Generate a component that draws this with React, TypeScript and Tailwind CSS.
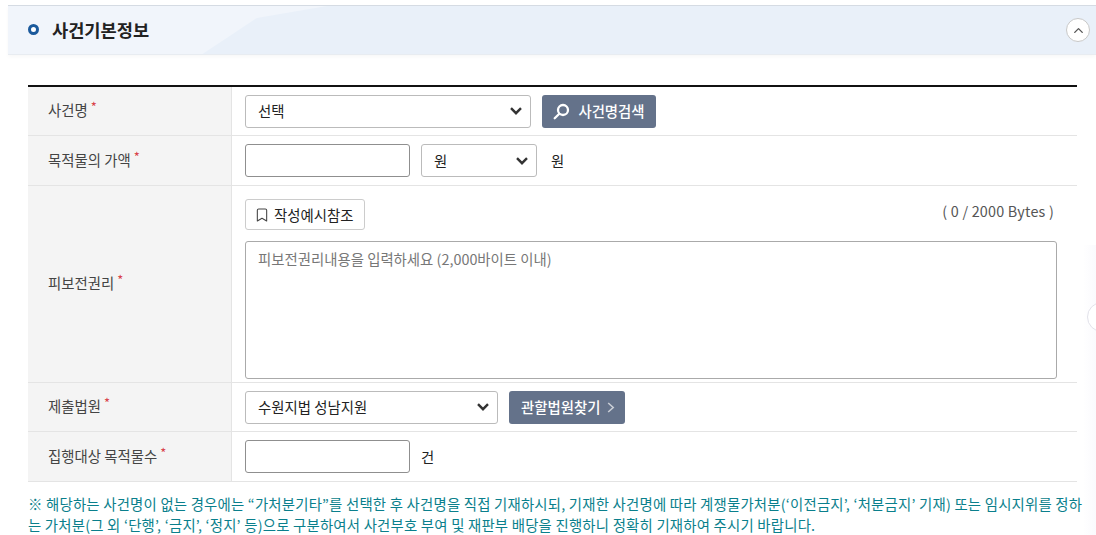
import { ChevronUp, Bookmark } from "lucide-react";
import type { ReactNode } from "react";

function Row({ label, className, children }: { label: string; className: string; children: ReactNode }) {
  return (
    <div className={`flex border-b border-[#e4e4e4] ${className}`}>
      <div className="flex w-[204px] shrink-0 items-center border-r border-[#e4e4e4] bg-[#f4f4f4] pb-[2px] pl-5 text-[14.4px] text-[#444]">
        {label}
        <span className="relative -top-[3px] ml-[3px] text-[13px] text-[#d9434a]">*</span>
      </div>
      <div className="min-w-0 flex-1 pl-[13px]">{children}</div>
    </div>
  );
}

function Caret() {
  return (
    <svg width="12" height="8" viewBox="0 0 12 8" fill="none" stroke="#333" strokeWidth="2.4">
      <path d="M1 1.2l5 5 5-5" />
    </svg>
  );
}

function Select({ value, className }: { value: string; className: string }) {
  return (
    <div className={`flex h-[33px] items-center justify-between rounded-[3px] border border-[#bbb] bg-white pl-3 pr-[8px] text-[14.4px] text-[#222] ${className}`}>
      {value}
      <Caret />
    </div>
  );
}

export default function App() {
  return (
    <div className="h-[535px] w-[1096px] overflow-hidden bg-white font-['Noto_Sans_CJK_KR','Noto_Sans',sans-serif]">
      <div className="pl-2 pt-[5px]">
        <div className="relative flex h-[50px] items-center justify-between overflow-hidden border-y border-t-[#d5dbe3] border-b-[#e8ecf1] bg-[#e9f0f9] pl-5 pr-[6px] shadow-[0_2px_4px_rgba(0,0,0,0.03)]">
          <span className="absolute inset-0 w-[319px] bg-[#f1f5fb] [clip-path:polygon(0_0,100%_0,78%_25%,61%_100%,0_100%)]" />
          <div className="relative flex items-center">
            <span className="h-[11px] w-[11px] rounded-full border-[3px] border-[#1c5a9c] bg-white" />
            <h2 className="ml-[13px] text-[17.6px] font-bold text-[#222]">사건기본정보</h2>
          </div>
          <button className="relative flex h-[24px] w-[24px] items-center justify-center rounded-full border border-[#c8c8c8] bg-white">
            <ChevronUp size={15} strokeWidth={2.2} className="text-[#555]" />
          </button>
        </div>
      </div>

      <div className="relative pl-7 pr-[19px] pt-[30px]">
        <div className="border-t-2 border-[#111]">
          <Row label="사건명" className="h-[49px]">
            <div className="flex h-full items-center">
              <Select value="선택" className="w-[286px]" />
              <button className="ml-[11px] flex h-[33px] w-[114px] items-center justify-center gap-[8px] rounded-[3px] bg-[#64728a] text-[14.4px] font-medium text-white">
                <svg width="17" height="17" viewBox="0 0 17 17" fill="none" stroke="#fff" strokeWidth="2.3">
                  <circle cx="10" cy="7" r="5" />
                  <path d="M6.3 10.7L1.7 15.3" strokeLinecap="round" />
                </svg>
                사건명검색
              </button>
            </div>
          </Row>
          <Row label="목적물의 가액" className="h-[50px]">
            <div className="flex h-full items-center">
              <div className="h-[33px] w-[165px] rounded-[3px] border border-[#8f8f8f] bg-white" />
              <Select value="원" className="ml-[11px] w-[116px]" />
              <span className="ml-[14px] text-[14.4px] text-[#222]">원</span>
            </div>
          </Row>
          <Row label="피보전권리" className="h-[197px]">
            <div className="pr-5 pt-[13px]">
              <div className="flex items-center justify-between">
                <button className="flex h-[31px] w-[120px] items-center gap-[4px] rounded-[3px] border border-[#ccc] bg-white pl-[8px] text-[14.4px] text-[#222]">
                  <Bookmark size={16} strokeWidth={1.6} className="text-[#444]" />
                  작성예시참조
                </button>
                <span className="relative -top-[4px] pr-[3px] text-[14.4px] tracking-[0.2px] text-[#555]">( 0 / 2000 Bytes )</span>
              </div>
              <div className="mt-[11px] h-[138px] rounded-[3px] border border-[#aaa] bg-white pl-3 pt-[6px] text-[14.4px] text-[#777]">
                피보전권리내용을 입력하세요 (2,000바이트 이내)
              </div>
            </div>
          </Row>
          <Row label="제출법원" className="h-[49px]">
            <div className="flex h-full items-center">
              <Select value="수원지법 성남지원" className="w-[253px]" />
              <button className="ml-[11px] flex h-[33px] w-[116px] items-center gap-[7px] rounded-[3px] bg-[#64728a] pl-3 text-[14.4px] font-medium text-white">
                관할법원찾기
                <svg width="8" height="11" viewBox="0 0 8 11" fill="none" stroke="#c9ced6" strokeWidth="1.6">
                  <path d="M1.2 1l5 4.5-5 4.5" />
                </svg>
              </button>
            </div>
          </Row>
          <Row label="집행대상 목적물수" className="h-[50px]">
            <div className="flex h-full items-center">
              <div className="h-[33px] w-[165px] rounded-[3px] border border-[#8f8f8f] bg-white" />
              <span className="ml-[11px] text-[14.4px] text-[#222]">건</span>
            </div>
          </Row>
        </div>
        <p className="mt-[11px] w-[1062px] text-[14.4px] leading-[21px] tracking-[0.2px] text-[#0a7f8c]">
          ※ 해당하는 사건명이 없는 경우에는 “가처분기타”를 선택한 후 사건명을 직접 기재하시되, 기재한 사건명에 따라 계쟁물가처분(‘이전금지’, ‘처분금지’ 기재) 또는 임시지위를 정하는 가처분(그 외 ‘단행’, ‘금지’, ‘정지’ 등)으로 구분하여서 사건부호 부여 및 재판부 배당을 진행하니 정확히 기재하여 주시기 바랍니다.
        </p>
        <span className="absolute left-[1083px] top-[190px] h-[300px] w-[13px] bg-gradient-to-r from-white to-[#fafafd]" />
        <span className="absolute left-[1087px] top-[247px] h-[30px] w-[30px] rounded-full border border-[#e2e2ea] bg-white" />
      </div>
    </div>
  );
}
